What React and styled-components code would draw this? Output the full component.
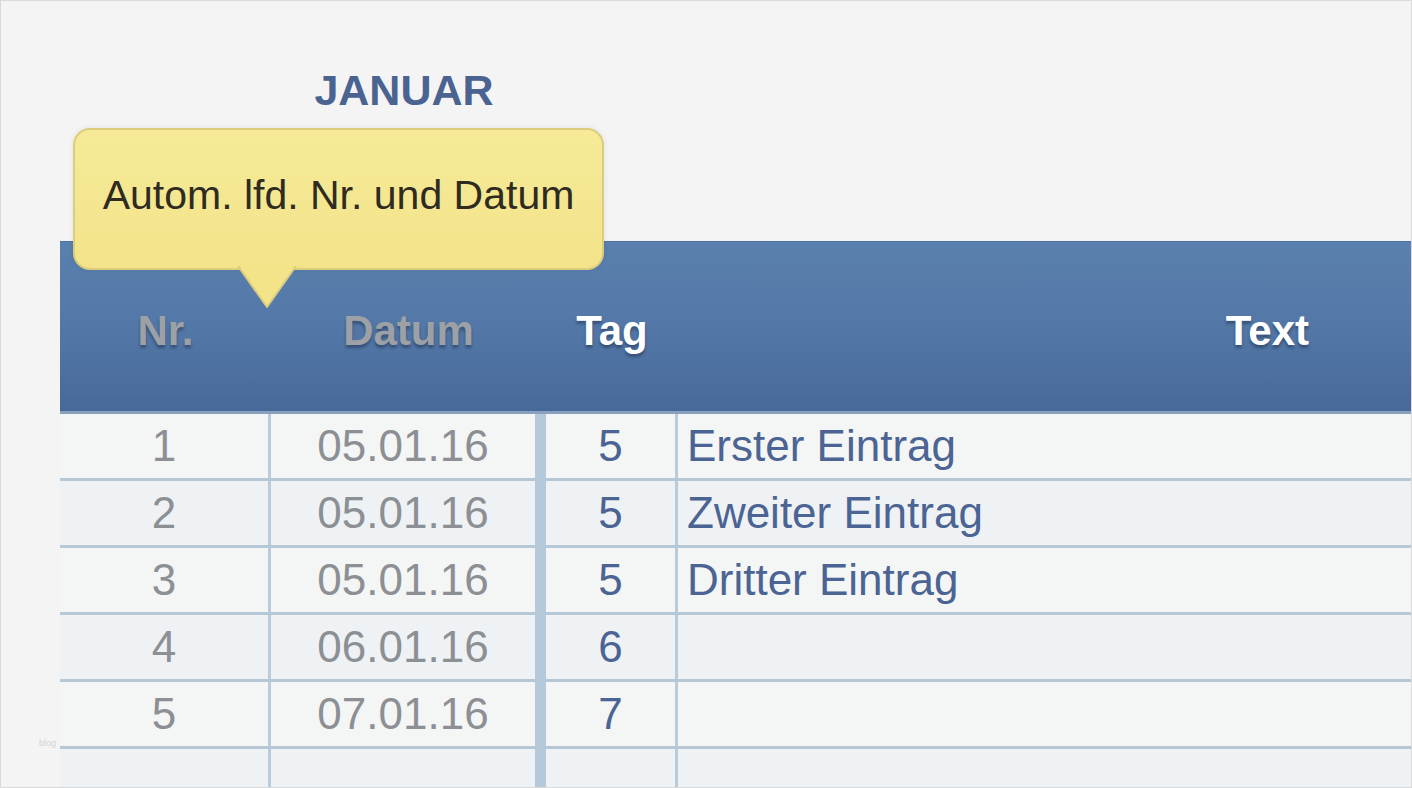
import React from "react";
import styled, { createGlobalStyle } from "styled-components";

const Global = createGlobalStyle`
  html, body { margin: 0; padding: 0; background: #f4f4f4; }
  body { font-family: "Liberation Sans", Arial, sans-serif; }
  * { box-sizing: border-box; }
`;

const Frame = styled.div`
  position: relative;
  width: 1412px;
  height: 788px;
  border: 1px solid #dadada;
  background: #f4f4f4;
  overflow: hidden;
  padding-left: 59px;
  display: flex;
  flex-direction: column;
`;

const TopArea = styled.div`
  height: 240px;
  flex: none;
  padding-top: 68px;
`;

const Title = styled.h1`
  margin: 0;
  width: 688px;
  text-align: center;
  font-family: "Liberation Sans", Arial, sans-serif;
  font-weight: 700;
  font-size: 43px;
  line-height: 1;
  color: #4a6391;
`;

const cols = "211px 275px 132px 1fr";

const HeaderRow = styled.div`
  display: grid;
  grid-template-columns: ${cols};
  height: 173px;
  flex: none;
  background: linear-gradient(#5a80ae 0%, #5479a8 45%, #47699a 100%);
  border-top: 1px solid #4f73a2;
  border-bottom: 3px solid #87a1bf;
`;

const HeadCell = styled.div`
  display: flex;
  align-items: center;
  justify-content: ${(p) => (p.$end ? "flex-end" : "center")};
  padding-top: 8px;
  padding-right: ${(p) => (p.$end ? "102px" : "0")};
  font-family: "Liberation Sans", Arial, sans-serif;
  font-weight: 700;
  font-size: 42px;
  color: ${(p) => (p.$muted ? "#9da1a6" : "#ffffff")};
  text-shadow: 0 3px 3px rgba(20, 35, 60, 0.45);
`;

const Row = styled.div`
  display: grid;
  grid-template-columns: ${cols};
  height: 67px;
  flex: none;
  background: ${(p) => (p.$alt ? "#eef2f5" : "#f4f5f5")};
  border-bottom: 3px solid #b6c8d6;
`;

const Cell = styled.div`
  display: flex;
  align-items: center;
  justify-content: ${(p) => (p.$left ? "flex-start" : "center")};
  padding-left: ${(p) => (p.$left ? "9px" : "0")};
  border-right: ${(p) =>
    p.$divider === "thick"
      ? "11px solid #b4c9da"
      : p.$divider === "thin"
      ? "3px solid #b9ccdb"
      : "none"};
  font-family: "Liberation Sans", Arial, sans-serif;
  font-weight: 400;
  font-size: 44px;
  color: ${(p) => (p.$tone === "blue" ? "#4b6493" : "#8c8f93")};
  white-space: nowrap;
`;

const Tooltip = styled.div`
  position: absolute;
  left: 72px;
  top: 127px;
  width: 531px;
  height: 142px;
  border: 2px solid #dccd7d;
  border-radius: 17px;
  background: linear-gradient(#f6ea98, #f3e48a);
  box-shadow: 0 0 6px rgba(0, 0, 0, 0.08);
  display: flex;
  align-items: center;
  justify-content: center;
  padding-bottom: 8px;
  font-family: "Liberation Sans", Arial, sans-serif;
  font-size: 41px;
  color: #2f2b21;
  z-index: 2;
`;

const Tail = styled.svg`
  position: absolute;
  left: 162px;
  top: 100%;
  margin-top: -3px;
  overflow: visible;
`;

const Watermark = styled.span`
  position: absolute;
  left: 38px;
  top: 737px;
  font-family: "Liberation Sans", Arial, sans-serif;
  font-size: 9px;
  color: #d2d2d2;
`;

const rows = [
  ["1", "05.01.16", "5", "Erster Eintrag"],
  ["2", "05.01.16", "5", "Zweiter Eintrag"],
  ["3", "05.01.16", "5", "Dritter Eintrag"],
  ["4", "06.01.16", "6", ""],
  ["5", "07.01.16", "7", ""],
  ["", "", "", ""],
];

export default function App() {
  return (
    <>
      <Global />
      <Frame>
        <TopArea>
          <Title>JANUAR</Title>
        </TopArea>
        <HeaderRow>
          <HeadCell $muted>Nr.</HeadCell>
          <HeadCell $muted>Datum</HeadCell>
          <HeadCell>Tag</HeadCell>
          <HeadCell $end>Text</HeadCell>
        </HeaderRow>
        {rows.map((r, i) => (
          <Row key={i} $alt={i % 2 === 1}>
            <Cell $divider="thin">{r[0]}</Cell>
            <Cell $divider="thick">{r[1]}</Cell>
            <Cell $divider="thin" $tone="blue">{r[2]}</Cell>
            <Cell $left $tone="blue">{r[3]}</Cell>
          </Row>
        ))}
        <Tooltip>
          Autom. lfd. Nr. und Datum
          <Tail width="60" height="44" viewBox="0 0 60 44">
            <polygon points="1,0 59,0 30,42" fill="#f3e48a" />
            <polyline
              points="1,1 30,42 59,1"
              fill="none"
              stroke="#dccd7d"
              strokeWidth="2"
              strokeLinejoin="round"
            />
          </Tail>
        </Tooltip>
        <Watermark>blog</Watermark>
      </Frame>
    </>
  );
}
